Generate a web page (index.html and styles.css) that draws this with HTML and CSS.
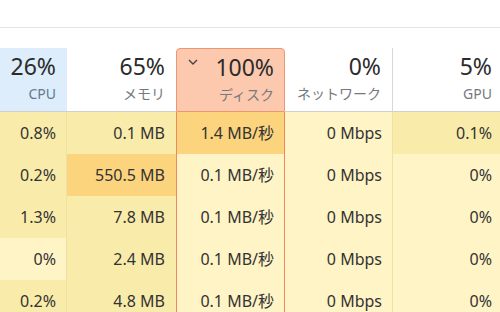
FILE: index.html
```html
<!DOCTYPE html>
<html lang="ja">
<head>
    <meta charset="UTF-8" />
    <title>タスク マネージャー</title>
    <link rel="stylesheet" href="styles.css">
</head>
<body>
<div class="toolbar"></div>
<div class="grid">
    <div class="head cpu">
        <div class="pct">26%</div>
        <div class="label">CPU</div>
    </div>
    <div class="head">
        <div class="pct">65%</div>
        <div class="label">メモリ</div>
    </div>
    <div class="head disk sorted">
        <svg class="chev" width="10" height="6" viewBox="0 0 10 6"><path d="M1 1 L5 5 L9 1" fill="none" stroke="#444" stroke-width="1.4"/></svg>
        <div class="pct">100%</div>
        <div class="label">ディスク</div>
    </div>
    <div class="head net">
        <div class="pct">0%</div>
        <div class="label">ネットワーク</div>
    </div>
    <div class="head">
        <div class="pct">5%</div>
        <div class="label">GPU</div>
    </div>

    <div class="cell h1 sep">0.8%</div>
    <div class="cell h1">0.1 MB</div>
    <div class="cell disk h3">1.4 MB/秒</div>
    <div class="cell h0 sep">0 Mbps</div>
    <div class="cell h1">0.1%</div>

    <div class="cell h1 sep">0.2%</div>
    <div class="cell h3">550.5 MB</div>
    <div class="cell disk h0">0.1 MB/秒</div>
    <div class="cell h0 sep">0 Mbps</div>
    <div class="cell h0">0%</div>

    <div class="cell h1 sep">1.3%</div>
    <div class="cell h1">7.8 MB</div>
    <div class="cell disk h0">0.1 MB/秒</div>
    <div class="cell h0 sep">0 Mbps</div>
    <div class="cell h0">0%</div>

    <div class="cell h0 sep">0%</div>
    <div class="cell h1">2.4 MB</div>
    <div class="cell disk h0">0.1 MB/秒</div>
    <div class="cell h0 sep">0 Mbps</div>
    <div class="cell h0">0%</div>

    <div class="cell h1 sep">0.2%</div>
    <div class="cell h1">4.8 MB</div>
    <div class="cell disk h0">0.1 MB/秒</div>
    <div class="cell h0 sep">0 Mbps</div>
    <div class="cell h0">0%</div>
</div>
</body>
</html>
```

FILE: styles.css
```css
body {
    margin: 0;
    background: #fff;
    font-family: "Noto Sans", "Noto Sans CJK JP", sans-serif;
    overflow: hidden;
}
.toolbar {
    height: 27px;
    border-bottom: 1px solid #e4e4e4;
    margin-bottom: 20px;
}
.grid {
    display: grid;
    grid-template-columns: 67px 109px 109px 108px 110px;
    grid-template-rows: 64px repeat(5, 42px);
}
.head {
    position: relative;
    text-align: right;
    padding-right: 11px;
    border-bottom: 1px solid #cfcfcf;
}
.head.cpu {
    background: #deedfb;
}
.head.net {
    border-right: 1px solid #d8d8d8;
}
.pct {
    font-size: 23px;
    color: #2b2b2b;
    line-height: 26px;
    margin-top: 5px;
}
.label {
    font-size: 14px;
    color: #74797f;
    line-height: 18px;
    margin-top: 6px;
}
.head.cpu .label {
    color: #66788c;
}
.head.sorted {
    background: #fcc9ae;
    border: 1px solid #ee9670;
    border-bottom: 1px solid #ee9670;
    border-radius: 4px 4px 0 0;
    padding-right: 10px;
}
.chev {
    position: absolute;
    left: 11px;
    top: 10px;
}
.cell {
    font-size: 16px;
    color: #333;
    text-align: right;
    padding-right: 11px;
    padding-top: 1px;
    line-height: 41px;
    white-space: nowrap;
}
.cell.sep {
    box-shadow: inset -1px 0 0 #efe1a4;
}
.cell.disk {
    border-left: 1px solid #ec8a5e;
    border-right: 1px solid #ec8a5e;
    padding-right: 10px;
}
.h0 {
    background: #fff4c6;
}
.h1 {
    background: #f9ecaa;
}
.h3 {
    background: #fdd47e;
}
```
